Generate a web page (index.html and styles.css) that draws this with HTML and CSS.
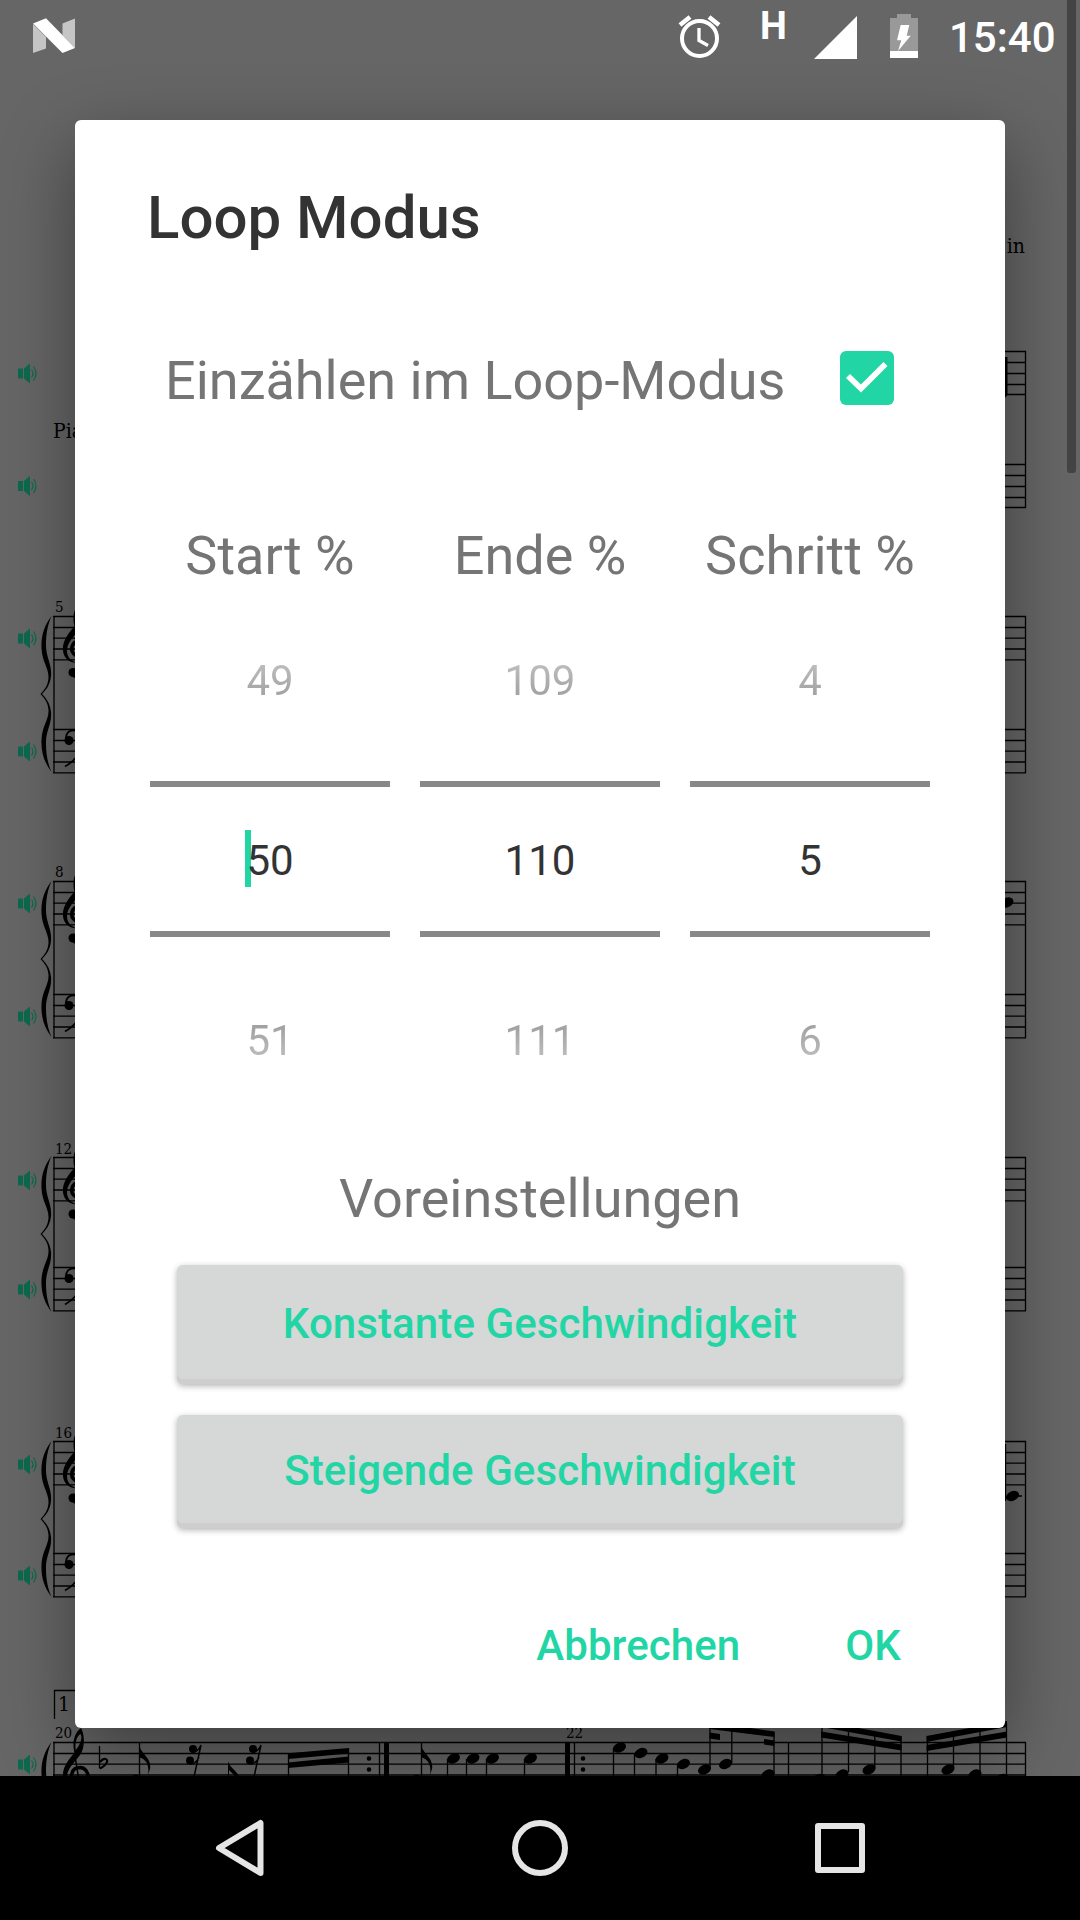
FILE: index.html
```html
<!DOCTYPE html>
<html lang="de">
<head>
    <meta charset="UTF-8">
    <meta name="viewport" content="width=device-width, initial-scale=1.0">
    <title>Loop Modus</title>
    <link rel="stylesheet" href="styles.css">
</head>
<body>
    <div class="screen">
        <!-- sheet music behind the dialog -->
        <svg class="score" width="1080" height="1776" viewBox="0 0 1080 1776">
            <defs>
                <g id="speaker" class="speaker">
                    <path d="M18 -5h5v10h-5zM24 -5l6 -5v20l-6 -5z"/>
                    <path class="wave" d="M31.5 -4q3 4 0 8M33.5 -7q5 7 0 14"/>
                </g>
                <path id="staff" d="M53 0H1026M53 11H1026M53 21.7H1026M53 32.5H1026M53 43.3H1026"/>
                <path id="staff-indent" d="M120 0H1026M120 11H1026M120 22H1026M120 33H1026M120 43H1026"/>
                <path id="brace" d="M51.5 0C44 10 41 20 41.5 32C42 46 49 52 48.5 62C48 70 44 74 40.5 78C44 82 48 86 48.5 94C49 104 42 110 41.5 124C41 136 44 146 51.5 156C48 148 46 139 46 127C46 114 52 108 51 96C50 86 45 81 42 78C45 75 50 70 51 60C52 48 46 42 46 29C46 17 48 8 51.5 0z"/>
                <g id="treble">
                    <path fill-rule="evenodd" d="M74.5 -22C65 -12 62.5 -5 63 2C63.5 10 70 14.5 78 14.5C70 12.5 67 8 67 2C67 -6 74 -12 80 -20C85 -27 85 -40 81 -47C74 -42 72 -32 74.5 -22zM75.8 -25C74.5 -32 77 -39 80.5 -41C83 -37 80 -30 75.8 -25z"/>
                    <path class="line" stroke-width="3.5" d="M76 7C69 3 71 -7.5 80 -7.5C91 -7 91 12 79 14"/>
                    <path class="line" stroke-width="1.5" d="M74.5 -22L81 18C82 30 74 31 72 26"/>
                    <circle cx="73" cy="24" r="4.5"/>
                </g>
                <g id="bass">
                    <circle cx="69" cy="11" r="4.5"/>
                    <path class="line" stroke-width="1.8" d="M66 9C66 2 71 0 77 1C88 5 84 26 65 37"/>
                </g>
                <ellipse id="note" rx="6.8" ry="4.8" transform="rotate(-25)"/>
                <g id="rest">
                    <circle cx="0" cy="0" r="4"/>
                    <circle cx="-3" cy="11.5" r="4"/>
                    <path class="line" stroke-width="1.5" d="M0 3Q5 3 8 -4L1 28M-3 15Q3 15 6 8"/>
                </g>
            </defs>

            <g class="label">
                <text x="1025" y="253" text-anchor="end">in</text>
                <text x="53" y="438">Piano</text>
                <text x="58" y="1711">1</text>
            </g>
            <g class="bar-number">
                <text x="55" y="612">5</text>
                <text x="55" y="877">8</text>
                <text x="55" y="1154">12</text>
                <text x="55" y="1438">16</text>
                <text x="55" y="1738">20</text>
                <text x="566" y="1738">22</text>
            </g>

            <g class="line">
                <use href="#staff-indent" y="351.5"/><use href="#staff-indent" y="464.5"/>
                <use href="#staff" y="616.5"/><use href="#staff" y="729.5"/>
                <use href="#staff" y="881.5"/><use href="#staff" y="994.5"/>
                <use href="#staff" y="1157.5"/><use href="#staff" y="1267.5"/>
                <use href="#staff" y="1441.5"/><use href="#staff" y="1553.5"/>
                <use href="#staff" y="1742.5"/>
                <path d="M54 616V773M54 881V1038M54 1157V1311M54 1441V1597M54 1742V1776"/>
                <path d="M1025.5 351V508M1025.5 616V773M1025.5 881V1038M1025.5 1157V1311M1025.5 1441V1597M1025.5 1742V1776"/>
                <path d="M54.5 1719V1690.5H400"/>
            </g>

            <use href="#brace" y="616"/><use href="#brace" y="881"/>
            <use href="#brace" y="1156"/><use href="#brace" y="1441"/>
            <use href="#brace" y="1742"/>

            <use href="#treble" y="648.5"/><use href="#treble" y="914"/>
            <use href="#treble" y="1190"/><use href="#treble" y="1474"/>
            <use href="#treble" y="1775"/>

            <use href="#bass" y="729.5"/><use href="#bass" y="994.5"/>
            <use href="#bass" y="1267.5"/><use href="#bass" y="1553.5"/>

            <use href="#speaker" y="373.5"/><use href="#speaker" y="486"/>
            <use href="#speaker" y="638.5"/><use href="#speaker" y="751.5"/>
            <use href="#speaker" y="903.5"/><use href="#speaker" y="1016.5"/>
            <use href="#speaker" y="1180.5"/><use href="#speaker" y="1289.5"/>
            <use href="#speaker" y="1464.5"/><use href="#speaker" y="1575.5"/>
            <use href="#speaker" y="1764.5"/>

            <!-- notes sticking out on the right side -->
            <path d="M1004 357h3.5v38l-3.5 4z"/>
            <use href="#note" x="1007" y="902.5"/>
            <use href="#note" x="1012.5" y="1496"/>
            <path class="line" d="M1005.5 1444V1501M1012 1496H1022"/>

            <!-- last system: first half -->
            <path class="line" d="M99.5 1746V1768.5"/>
            <path class="line" stroke-width="2.2" d="M100 1762C104 1757 108 1759 107 1762C106 1765 103 1767 100 1768.5"/>
            <path class="line" d="M139.5 1743V1776M421.5 1743V1776"/>
            <path d="M139 1744C140 1754 152 1757 150 1769L148 1775C150 1762 144 1759 139 1757zM421 1744C422 1754 434 1757 432 1769L430 1775C432 1762 426 1759 421 1757z"/>
            <use href="#rest" x="193" y="1749"/>
            <use href="#rest" x="253" y="1749"/>
            <path d="M228 1761C229 1767 236 1770 239 1776H235L229 1770V1776H228zM132 1776q3 -2 6 -1v1zM413 1776q3 -2 6 -1v1z"/>
            <path d="M288 1753.3L349 1748V1753.5L288 1759zM288 1762.5L349 1756.5V1762.5L288 1768z"/>
            <path class="line" d="M288.5 1753V1776M348.5 1748V1776M379.5 1742V1776"/>
            <rect x="384" y="1742" width="5" height="34"/>
            <circle cx="369" cy="1758.5" r="2.3"/><circle cx="369" cy="1769.5" r="2.3"/>
            <use href="#note" x="453.5" y="1758.5"/><use href="#note" x="473" y="1758.5"/>
            <use href="#note" x="492.5" y="1758.5"/><use href="#note" x="530.5" y="1758.5"/>
            <path class="line" d="M447.5 1759V1776M466.5 1759V1776M486.5 1759V1776M524.5 1759V1776"/>

            <!-- last system: second half -->
            <rect x="565" y="1742" width="5" height="34"/>
            <circle cx="583" cy="1758.5" r="2.3"/><circle cx="583" cy="1769.5" r="2.3"/>
            <path class="line" d="M574.5 1742V1776M788.5 1742V1776"/>
            <use href="#note" x="619.5" y="1747.5"/><use href="#note" x="641" y="1753"/>
            <use href="#note" x="662" y="1758.5"/><use href="#note" x="683.5" y="1764"/>
            <use href="#note" x="704.5" y="1769.5"/><use href="#note" x="725.5" y="1764"/>
            <use href="#note" x="768" y="1774.5"/>
            <path class="line" d="M613.5 1748V1776M634.5 1754V1776M656 1759V1776M677.5 1765V1776M710 1726V1769M731.8 1728V1763M774 1732V1774"/>
            <path d="M709.5 1722L774.5 1731.5V1737L709.5 1729zM709.5 1732.5L720 1734V1740L709.5 1738.5zM764 1739L774.5 1740.5V1746L764 1744.5z"/>
            <path d="M821 1721L901.5 1736V1741.5L821 1727zM821 1731.5L901.5 1744.5V1750.5L821 1737.5z"/>
            <path d="M926.5 1736L1007 1721V1727L926.5 1742zM926.5 1745L1007 1731.5V1737.5L926.5 1751z"/>
            <path class="line" d="M822 1725V1776M848.5 1728V1772M874.8 1732V1768M901 1736V1776M927.5 1736V1776M953.5 1732V1768M980 1728V1773M1006.5 1723V1776"/>
            <use href="#note" x="819" y="1779"/><use href="#note" x="842" y="1774.5"/>
            <use href="#note" x="869" y="1769.5"/><use href="#note" x="948" y="1769.5"/>
            <use href="#note" x="975" y="1774.5"/><use href="#note" x="1002" y="1779"/>

            <rect class="scrollbar" x="1067" y="-6" width="9" height="479" rx="3"/>
        </svg>

        <header class="status-bar">
            <svg class="android-n" width="42" height="35" viewBox="33 18 42 35">
                <path fill="#c5c5c5" d="M33 24L46 37V48.5L33 53zM62.5 23.5L75 18.5V48L62.5 35z"/>
                <path fill="#fff" d="M33 23.5L46 18.3L75 48L62.5 53z"/>
            </svg>
            <svg class="alarm" width="44" height="44" viewBox="678 15 44 44">
                <g fill="none" stroke="#fff" stroke-width="4">
                    <circle cx="699.5" cy="38.5" r="17.5"/>
                    <path stroke-width="3.3" d="M699 28V40.5L708 45.5"/>
                    <path stroke-width="4.5" d="M680 25L690 17M719 25L709 17"/>
                </g>
            </svg>
            <span class="network">H</span>
            <svg class="signal" width="43" height="43" viewBox="0 0 43 43">
                <path fill="#fff" d="M0 43L43 0V43z"/>
            </svg>
            <svg class="battery" width="28" height="44" viewBox="890 14 28 44">
                <path fill="#999" d="M897 14h14v4h7v40h-28v-40h7z"/>
                <path fill="#fff" d="M890 51h28v7h-28zM900.7 25H909.3L906.7 35.7H910.7L898 51L901.3 40.3H897z"/>
            </svg>
            <span class="clock">15:40</span>
        </header>

        <main class="dialog">
            <h1>Loop Modus</h1>
            <div class="check-row">
                <span>Einzählen im Loop-Modus</span>
                <svg class="checkbox" width="54" height="54" viewBox="0 0 54 54">
                    <rect width="54" height="54" rx="6" fill="#21d6a4"/>
                    <path d="M8 25L21 37.5L45.500 13" fill="none" stroke="#fff" stroke-width="5.8"/>
                </svg>
            </div>

            <div class="pickers">
                <div class="picker">
                    <div class="picker-title">Start %</div>
                    <div class="value before">49</div>
                    <div class="value current"><span class="editing">50</span></div>
                    <div class="value after">51</div>
                </div>
                <div class="picker">
                    <div class="picker-title">Ende %</div>
                    <div class="value before">109</div>
                    <div class="value current">110</div>
                    <div class="value after">111</div>
                </div>
                <div class="picker">
                    <div class="picker-title">Schritt %</div>
                    <div class="value before">4</div>
                    <div class="value current">5</div>
                    <div class="value after">6</div>
                </div>
            </div>

            <div class="presets">
                <div class="presets-title">Voreinstellungen</div>
                <button class="preset">Konstante Geschwindigkeit</button>
                <button class="preset second">Steigende Geschwindigkeit</button>
            </div>

            <div class="actions">
                <button>Abbrechen</button>
                <button>OK</button>
            </div>
        </main>

        <nav class="nav-bar">
            <svg width="60" height="60" viewBox="210 1818 60 60"><path d="M260.5 1823V1873L219 1848z"/></svg>
            <svg width="60" height="60" viewBox="0 0 60 60"><circle cx="30" cy="30" r="25"/></svg>
            <svg width="60" height="60" viewBox="0 0 60 60"><rect x="8" y="8" width="44" height="44"/></svg>
        </nav>
    </div>
</body>
</html>
```
FILE: styles.css
```css
* {
    box-sizing: border-box;
}
body {
    margin: 0;
    font-family: Roboto, sans-serif;
    background: #666;
}
.screen {
    position: relative;
    width: 1080px;
    height: 1920px;
    overflow: hidden;
    display: flex;
    flex-direction: column;
    background: #666;
}

/* score */
.score {
    position: absolute;
    top: 0;
    left: 0;
    stroke-width: 1.3;
}
.line {
    fill: none;
    stroke: #000;
}
.label {
    font-family: "DejaVu Serif Condensed", "DejaVu Serif", serif;
    font-stretch: condensed;
    font-size: 21px;
}
.bar-number {
    font-family: "DejaVu Serif Condensed", "DejaVu Serif", serif;
    font-stretch: condensed;
    font-size: 15px;
}
.speaker {
    fill: #0c6a4e;
}
.wave {
    fill: none;
    stroke: #0c6a4e;
    stroke-width: 1.2;
}
.scrollbar {
    fill: #444;
}

/* status bar */
.status-bar {
    position: relative;
    z-index: 1;
    flex: none;
    height: 72px;
    display: flex;
    align-items: flex-start;
    color: #fff;
}
.android-n {
    margin: 18px 0 0 33px;
}
.alarm {
    margin: 15px 0 0 603px;
}
.network {
    width: 28px;
    margin: 4px 0 0 38px;
    font-size: 38px;
    font-weight: 700;
    line-height: 45px;
}
.signal {
    margin: 16px 0 0 26px;
}
.battery {
    margin: 14px 0 0 33px;
}
.clock {
    margin: 13px 0 0 31px;
    font-size: 42px;
    font-weight: 500;
    line-height: 50px;
}

/* dialog */
.dialog {
    position: relative;
    flex: none;
    width: 930px;
    height: 1608px;
    margin: 48px 0 48px 75px;
    padding: 63px 72px 0;
    background: #fff;
    border-radius: 6px;
    box-shadow: 0 24px 72px rgba(0, 0, 0, 0.4);
    color: #757575;
    font-size: 54px;
    line-height: 64px;
}
h1 {
    margin: 0;
    color: #333;
    font-size: 60px;
    font-weight: 500;
    line-height: 70px;
}
.check-row {
    display: flex;
    justify-content: space-between;
    margin-top: 96px;
    padding: 0 39px 0 18px;
}
.checkbox {
    margin-top: 2px;
}
.pickers {
    display: flex;
    justify-content: center;
    gap: 30px;
    margin-top: 111px;
}
.picker {
    width: 240px;
    text-align: center;
}
.picker-title {
    white-space: nowrap;
}
.value {
    font-size: 42px;
    line-height: 50px;
}
.before,
.after {
    color: transparent;
    background-clip: text;
    -webkit-background-clip: text;
}
.before {
    margin-top: 68px;
    background-image: linear-gradient(#c4c4c4, #999);
}
.current {
    position: relative;
    z-index: 0;
    height: 156px;
    margin-top: 75px;
    padding-top: 49px;
    border-top: 6px solid #888;
    border-bottom: 6px solid #888;
    color: #333;
}
.after {
    margin-top: 79px;
    background-image: linear-gradient(#999, #c4c4c4);
}
.editing {
    position: relative;
}
.editing::before {
    content: "";
    position: absolute;
    left: -1px;
    top: -6px;
    width: 6px;
    height: 57px;
    background: #21d6a4;
    z-index: -1;
}
.presets {
    display: flex;
    flex-direction: column;
    align-items: center;
    margin-top: 101px;
}
button {
    padding: 0;
    border: none;
    background: none;
    color: #21d6a4;
    font-family: inherit;
    font-size: 42px;
    font-weight: 500;
    line-height: 50px;
    letter-spacing: 0.1px;
}
.preset {
    width: 726px;
    height: 119px;
    margin-top: 34px;
    padding-bottom: 2px;
    background: #d6d7d7;
    border-radius: 6px;
    box-shadow: inset 0 -5px 1px #cdcecd, 0 2px 6px rgba(0, 0, 0, 0.3);
}
.second {
    height: 113px;
    margin-top: 31px;
}
.actions {
    display: flex;
    justify-content: flex-end;
    gap: 105px;
    margin-top: 93px;
    padding-right: 32px;
}

/* navigation */
.nav-bar {
    position: relative;
    flex: none;
    height: 144px;
    padding: 0 90px;
    display: flex;
    justify-content: space-around;
    align-items: center;
    background: #000;
}
.nav-bar svg {
    fill: none;
    stroke: #e5e5e5;
    stroke-width: 6;
    stroke-linejoin: round;
}
```
